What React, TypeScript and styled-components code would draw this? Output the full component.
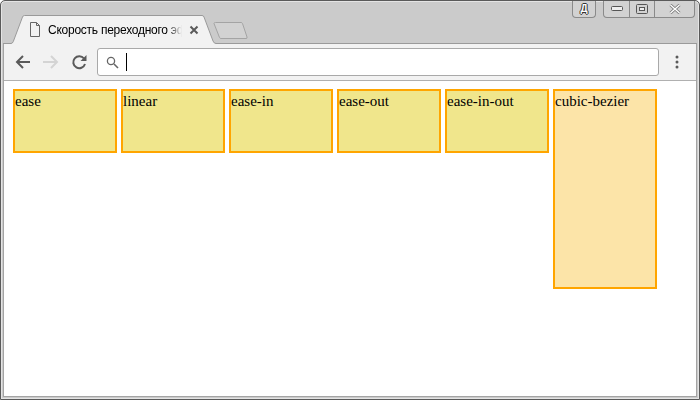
import React from 'react';
import styled, { createGlobalStyle } from 'styled-components';

const Global = createGlobalStyle`
  html, body { margin: 0; padding: 0; background: #fff; }
  #root { width: 700px; height: 400px; overflow: hidden; }
`;

const Win = styled.div`
  width: 700px; height: 400px; box-sizing: border-box;
  display: flex; flex-direction: column;
  background: #cbcbcb;
  border: 1px solid #5a5a5a;
  border-radius: 5px 5px 0 0;
  box-shadow: inset 0 0 0 1px #e4e4e4;
  padding: 0 2px 2px 2px;
  overflow: hidden;
`;
const TitleBar = styled.div`
  position: relative; height: 43px; flex: none; box-sizing: border-box;
  border-bottom: 1px solid #9a9a9a;
`;
const Caption = styled.div`
  position: absolute; top: -1px; right: 2px; display: flex; gap: 7px;
`;
const CapGroup = styled.div`
  display: flex; height: 18px; box-sizing: border-box;
  border: 1px solid #8a8a8a; border-top: none; border-radius: 0 0 4px 4px;
  background: #d2d2d2; box-shadow: inset 0 1px 0 #e6e6e6;
`;
const CapBtn = styled.div<{ $w: number; $sep?: boolean }>`
  width: ${p => p.$w}px; display: flex; align-items: center; justify-content: center;
  box-sizing: border-box;
  border-left: ${p => (p.$sep ? '1px solid #8a8a8a' : 'none')};
`;
const LangMark = styled.span`
  font: bold 10px/12px "Liberation Sans", Arial, sans-serif; color: #fff;
  text-shadow: 1px 0 0 #333, -1px 0 0 #333, 0 1px 0 #333, 0 -1px 0 #333;
`;
const Tab = styled.div`
  position: absolute; left: 7px; top: 14px; width: 206px; height: 29px;
  display: flex; align-items: center; padding: 0 0 0 19px; box-sizing: border-box;
  font: 12px/14px "Liberation Sans", Arial, sans-serif; color: #000;
`;
const TabShape = styled.svg`
  position: absolute; inset: 0; width: 206px; height: 29px;
`;
const DocIcon = styled.svg`
  position: relative; width: 12px; height: 15px; flex: none; margin-right: 7px;
`;
const TabTitle = styled.span`
  position: relative; width: 134px; white-space: nowrap; overflow: hidden;
  letter-spacing: -0.25px;
  -webkit-mask-image: linear-gradient(to right, #000 120px, transparent 134px);
  mask-image: linear-gradient(to right, #000 120px, transparent 134px);
`;
const TabClose = styled.svg`
  position: relative; width: 10px; height: 10px; margin-left: 7px; flex: none;
`;
const NewTab = styled.svg`
  position: absolute; left: 210px; top: 20px; width: 36px; height: 20px;
`;
const Client = styled.div`
  flex: 1; min-height: 0; display: flex; flex-direction: column;
  border: 1px solid #a4a4a4; border-top: none;
`;
const Toolbar = styled.div`
  flex: none; box-sizing: border-box; background: #f2f2f2;
  display: flex; align-items: center; padding: 0 0 0 10px;
  border-bottom: 1px solid #b0b0b0; height: 37px;
`;
const NavIcon = styled.svg`
  width: 18px; height: 18px; flex: none; margin-right: 10px;
`;
const Omni = styled.div`
  width: 562px; height: 28px; box-sizing: border-box; flex: none; margin-left: -1px;
  background: #fff; border: 1px solid #a9a9a9; border-radius: 3px;
  display: flex; align-items: center; padding-left: 8px;
`;
const Caret = styled.div`
  width: 1px; height: 18px; background: #000; margin-left: 7px;
`;
const Kebab = styled.svg`
  width: 4px; height: 14px; margin-left: 16px; flex: none;
`;
const Page = styled.div`
  flex: 1; background: #fff; display: flex; align-items: flex-start; gap: 4px;
  padding: 8px 9px;
`;
const Box = styled.div<{ $tall?: boolean }>`
  width: 104px; height: ${p => (p.$tall ? 200 : 64)}px; box-sizing: border-box;
  border: 2px solid orange;
  background: ${p => (p.$tall ? '#fce4a8' : '#f0e68c')};
  font: 15px/20px "Liberation Serif", "Times New Roman", serif; color: #000;
`;

const names = ['ease', 'linear', 'ease-in', 'ease-out', 'ease-in-out'];

export default function App() {
  return (
    <Win>
      <Global />
      <TitleBar>
        <Tab>
          <TabShape viewBox="0 0 206 29">
            <path d="M0 29 V28.5 H1 Q2.5 28.5 3.3 26.5 L12.5 2 Q13 0.5 14.5 0.5 H192 Q193.5 0.5 194 2 L203 26 Q204 28.5 206 28.5 V29 Z" fill="#f2f2f2" />
            <path d="M0 28.5 H1 Q2.5 28.5 3.3 26.5 L12.5 2 Q13 0.5 14.5 0.5 H192 Q193.5 0.5 194 2 L203 26 Q204 28.5 206 28.5" fill="none" stroke="#9a9a9a" />
          </TabShape>
          <DocIcon viewBox="0 0 12 15">
            <path d="M1.5 0.5 H7.5 L10.5 3.5 V14.5 H1.5 Z M7.5 0.5 V3.5 H10.5" fill="none" stroke="#666" />
          </DocIcon>
          <TabTitle>Скорость переходного эффекта</TabTitle>
          <TabClose viewBox="0 0 10 10">
            <path d="M1.5 1.5 L8.5 8.5 M8.5 1.5 L1.5 8.5" stroke="#5a5a5a" strokeWidth="2" />
          </TabClose>
        </Tab>
        <NewTab viewBox="0 0 36 20">
          <path d="M1 2.5 Q1 1.5 2.5 1.5 H28 Q29 1.5 29.5 2.5 L34 16 Q34.5 17.5 33 17.5 H8 Q7 17.5 6.5 16.5 Z" fill="#d2d2d2" stroke="#a4a4a4" />
        </NewTab>
        <Caption>
          <CapGroup>
            <CapBtn $w={22}>
              <LangMark>Д</LangMark>
            </CapBtn>
          </CapGroup>
          <CapGroup>
            <CapBtn $w={25}>
              <svg width="12" height="5" viewBox="0 0 12 5"><rect x="0.5" y="0.5" width="11" height="4" rx="1" fill="#eee" stroke="#555" /></svg>
            </CapBtn>
            <CapBtn $w={25} $sep>
              <svg width="12" height="10" viewBox="0 0 12 10"><rect x="0.5" y="0.5" width="11" height="9" rx="1" fill="none" stroke="#555" /><rect x="3.5" y="3.5" width="5" height="3" fill="#eee" stroke="#555" /></svg>
            </CapBtn>
            <CapBtn $w={40} $sep>
              <svg width="12" height="10" viewBox="0 0 12 10"><path d="M1.5 1 L10.5 9 M10.5 1 L1.5 9" stroke="#777" strokeWidth="3" /><path d="M1.5 1 L10.5 9 M10.5 1 L1.5 9" stroke="#fff" strokeWidth="1.4" /></svg>
            </CapBtn>
          </CapGroup>
        </Caption>
      </TitleBar>
      <Client>
        <Toolbar>
          <NavIcon viewBox="0 0 18 18">
            <path d="M16 9 H3 M9 3 L3 9 L9 15" fill="none" stroke="#5a5a5a" strokeWidth="2" />
          </NavIcon>
          <NavIcon viewBox="0 0 18 18">
            <path d="M1 9 H15 M9 3 L15 9 L9 15" fill="none" stroke="#d4d4d4" strokeWidth="2" />
          </NavIcon>
          <NavIcon viewBox="0 0 18 18">
            <path d="M15 11 A6 6 0 1 1 14 5.5" fill="none" stroke="#5a5a5a" strokeWidth="2" />
            <path d="M16.5 2 V8 H10.5 Z" fill="#5a5a5a" />
          </NavIcon>
          <Omni>
            <svg width="13" height="13" viewBox="0 0 13 13">
              <circle cx="5" cy="5" r="3.6" fill="none" stroke="#666" strokeWidth="1.3" />
              <path d="M8 8 L12 12" stroke="#666" strokeWidth="1.6" />
            </svg>
            <Caret />
          </Omni>
          <Kebab viewBox="0 0 4 14">
            <circle cx="2" cy="2" r="1.5" fill="#5a5a5a" />
            <circle cx="2" cy="7" r="1.5" fill="#5a5a5a" />
            <circle cx="2" cy="12" r="1.5" fill="#5a5a5a" />
          </Kebab>
        </Toolbar>
        <Page>
          {names.map(n => <Box key={n}>{n}</Box>)}
          <Box $tall>cubic-bezier</Box>
        </Page>
      </Client>
    </Win>
  );
}
